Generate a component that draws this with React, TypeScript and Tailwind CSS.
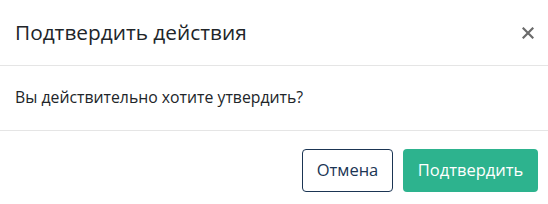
import React from "react";

export default function App() {
  return (
    <div className="w-[548px] h-[204px] bg-white overflow-hidden" style={{ fontFamily: '"Open Sans", "Noto Sans", sans-serif' }}>
      <div className="h-[66px] flex items-center justify-between pl-[15px] pr-[12px] border-b border-[#e5e5e5]">
        <h1 className="text-[20.8px] text-[#212529] leading-none">Подтвердить действия</h1>
        <button className="w-[16px] h-[16px] flex items-center justify-center text-[#6b6b6b]">
          <svg width="12" height="12" viewBox="0 0 12 12" fill="none" stroke="currentColor" strokeWidth="2.2" strokeLinecap="square">
            <path d="M1.5 1.5 L10.5 10.5 M10.5 1.5 L1.5 10.5" />
          </svg>
        </button>
      </div>
      <div className="h-[65px] flex items-center pl-[15px] border-b border-[#e5e5e5]">
        <p className="text-[15.8px] text-[#212529] leading-none">Вы действительно хотите утвердить?</p>
      </div>
      <div className="flex justify-end gap-[10px] pt-[18px] pr-[10px]">
        <button className="h-[43px] w-[91px] rounded-[4px] border border-[#1b3554] text-[#1b3554] text-[16.5px] bg-white">Отмена</button>
        <button className="h-[43px] w-[135px] rounded-[4px] bg-[#2db38e] text-white text-[16.5px]">Подтвердить</button>
      </div>
    </div>
  );
}
